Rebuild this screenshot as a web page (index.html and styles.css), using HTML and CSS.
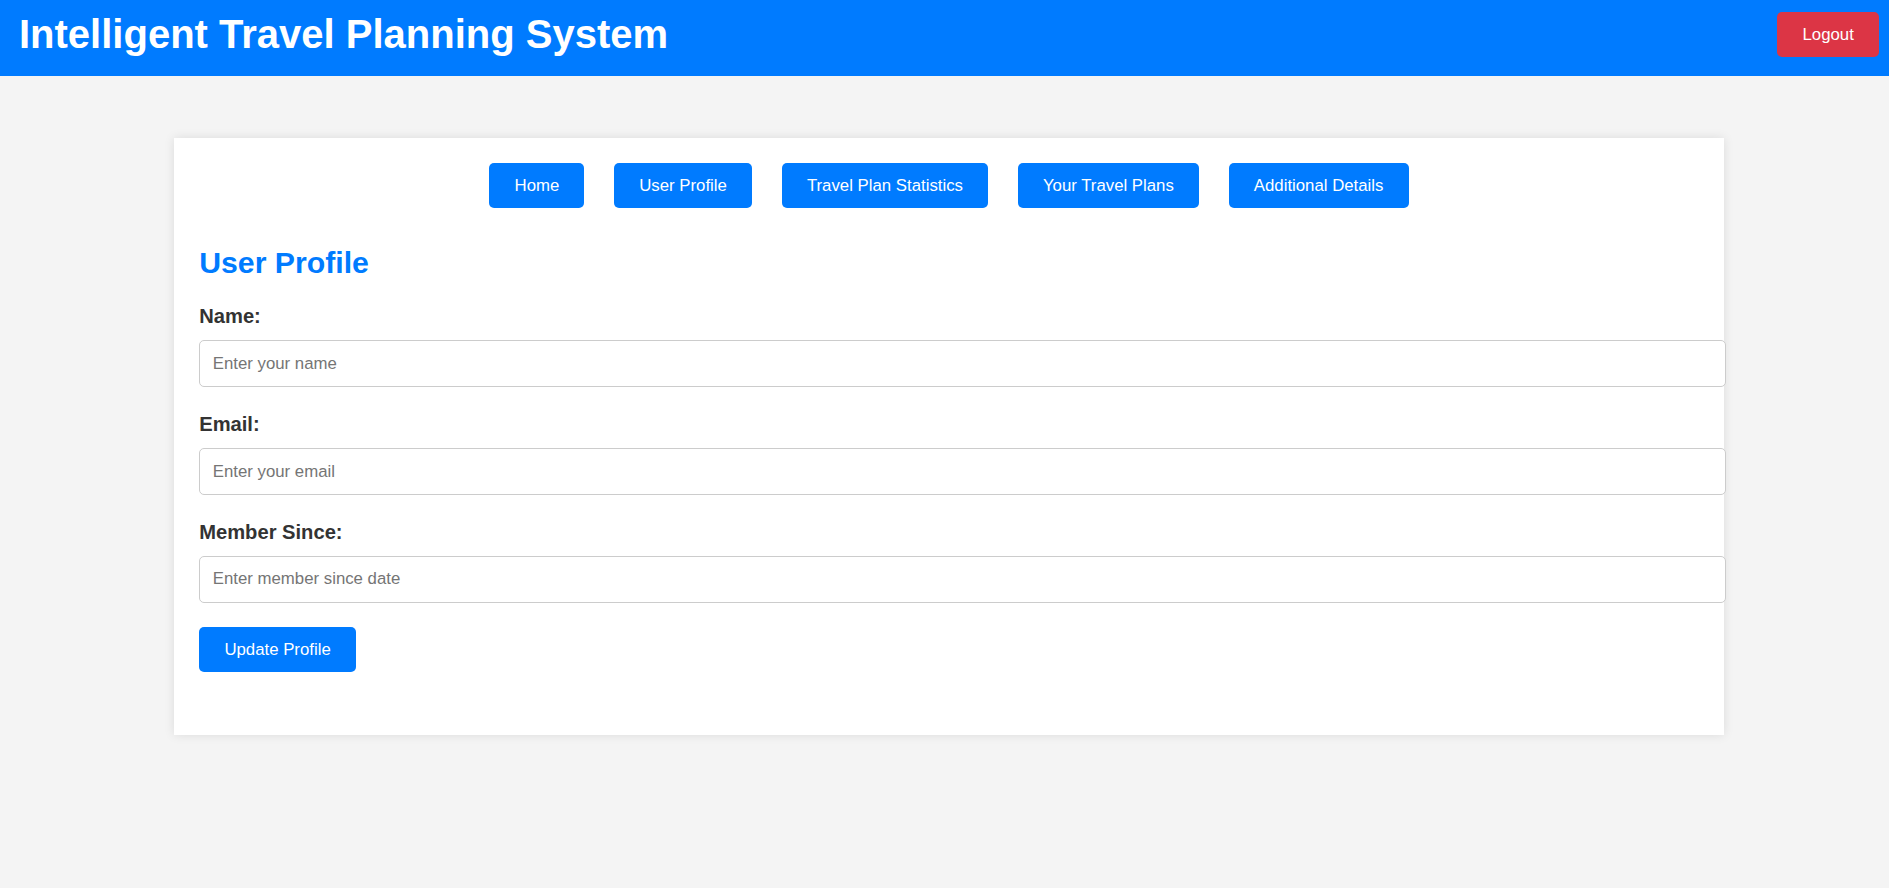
FILE: index.html
```html
<!DOCTYPE html>
<html lang="en">
<head>
<meta charset="UTF-8">
<title>Intelligent Travel Planning System</title>
<link rel="stylesheet" href="styles.css">
</head>
<body>
<header class="topbar">
  <h1 class="title">Intelligent Travel Planning System</h1>
  <button class="btn btn-danger">Logout</button>
</header>
<main class="card">
  <nav class="nav">
    <button class="btn">Home</button>
    <button class="btn">User Profile</button>
    <button class="btn">Travel Plan Statistics</button>
    <button class="btn">Your Travel Plans</button>
    <button class="btn">Additional Details</button>
  </nav>
  <h2 class="section-title">User Profile</h2>
  <form class="form">
    <label class="label" for="name">Name:</label>
    <input class="input" id="name" type="text" placeholder="Enter your name">
    <label class="label" for="email">Email:</label>
    <input class="input" id="email" type="email" placeholder="Enter your email">
    <label class="label" for="since">Member Since:</label>
    <input class="input" id="since" type="text" placeholder="Enter member since date">
    <div class="actions"><button class="btn" type="button">Update Profile</button></div>
  </form>
</main>
</body>
</html>
```

FILE: styles.css
```css
* { margin: 0; }
html, body { height: 100%; }
body {
  margin: 0;
  background: #f4f4f4;
  font-family: "Liberation Sans", Arial, sans-serif;
  color: #333;
}
.topbar {
  background: #007bff;
  height: 76px;
  box-sizing: border-box;
  padding: 11px 10px 0 19px;
  display: flex;
  justify-content: space-between;
  align-items: flex-start;
}
.title {
  color: #fff;
  font-size: 40px;
  font-weight: bold;
  line-height: 46px;
}
.btn {
  font-family: "Liberation Sans", Arial, sans-serif;
  font-size: 16.8px;
  line-height: 19.8px;
  padding: 12.6px 25.2px;
  border: none;
  border-radius: 5px;
  background: #007bff;
  color: #fff;
  cursor: pointer;
  white-space: nowrap;
}
.btn-danger {
  background: #dc3545;
  margin-top: 1px;
}
.card {
  display: block;
  background: #fff;
  margin: 62px 165px 0 174px;
  padding: 25px 25.2px 63px 25.2px;
  box-shadow: 0 0 10px rgba(0, 0, 0, 0.1);
}
.nav {
  display: flex;
  justify-content: center;
  gap: 29.6px;
  margin-bottom: 38px;
}
.section-title {
  color: #007bff;
  font-size: 30.24px;
  font-weight: bold;
  line-height: 34px;
  margin-bottom: 25px;
}
.form {
  display: flex;
  flex-direction: column;
  align-items: flex-start;
}
.label {
  display: block;
  font-size: 20.16px;
  font-weight: bold;
  line-height: 22px;
  color: #333;
  margin-bottom: 13.5px;
}
.input {
  display: block;
  width: 100%;
  box-sizing: content-box;
  height: 19.2px;
  padding: 12.6px 12.6px;
  border: 1px solid #ccc;
  border-radius: 5px;
  font-family: "Liberation Sans", Arial, sans-serif;
  font-size: 16.8px;
  margin-bottom: 26px;
  background: #fff;
}
.input::placeholder { color: #757575; }
.actions { margin-top: -1.2px; }
```
